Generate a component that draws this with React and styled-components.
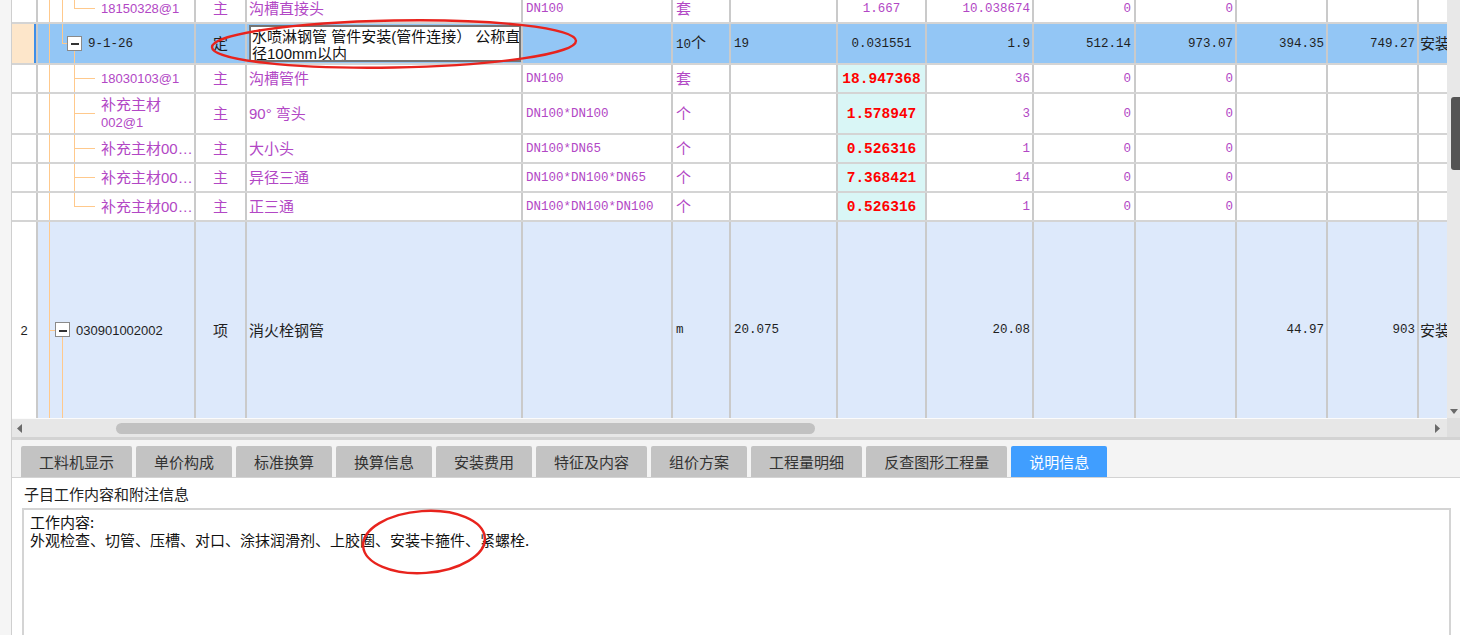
import React from "react";
import styled, { createGlobalStyle } from "styled-components";

const GlobalStyle = createGlobalStyle`
  * { box-sizing: border-box; }
  html, body { margin: 0; padding: 0; background: #ffffff; }
  body {
    font-family: "Liberation Sans", "Noto Sans CJK SC", sans-serif;
    font-size: 13px;
    color: #1e1e1e;
    overflow: hidden;
  }
`;

const PURPLE = "#b247c5";
const DARK = "#1f1f1f";
const TREE = "#ffc98c";

const COLS = [26, 158, 51, 276, 150, 58, 107, 89, 107, 102, 101, 91, 91, 80];

const Page = styled.div`
  position: relative;
  width: 1460px;
  height: 635px;
  overflow: hidden;
  display: flex;
  background: #ffffff;
`;

const Gutter = styled.div`
  flex: none;
  width: 12px;
  background: #f5f5f5;
  border-right: 1px solid #cfcfcf;
`;

const Main = styled.div`
  flex: 1;
  min-width: 0;
  display: flex;
  flex-direction: column;
`;

const GridArea = styled.div`
  flex: none;
  height: 418px;
  display: flex;
`;

const Viewport = styled.div`
  flex: 1;
  min-width: 0;
  overflow: hidden;
  background: #ffffff;
`;

const Body = styled.div`
  margin-top: -5px;
  width: 1487px;
`;

const Row = styled.div`
  display: flex;
  height: ${(p) => p.$h}px;
  border-bottom: 2px solid #d4d4d4;
  background: ${(p) => p.$bg};
  color: ${(p) => p.$color};
`;

const Cell = styled.div`
  flex: none;
  width: ${(p) => p.$w}px;
  border-right: 2px solid #cacaca;
  display: flex;
  align-items: center;
  justify-content: ${(p) =>
    p.$align === "center" ? "center" : p.$align === "right" ? "flex-end" : "flex-start"};
  padding: ${(p) => p.$pad || "0 3px"};
  background: ${(p) => p.$bg || "transparent"};
  box-shadow: ${(p) => (p.$mark ? "inset -2px 0 0 #3d8ee8" : "none")};
  overflow: hidden;
  white-space: nowrap;
`;

const Cjk = styled.span`
  font-family: "Liberation Sans", "Noto Sans CJK SC", sans-serif;
  font-size: 15px;
  line-height: 17px;
`;

const CodeText = styled.span`
  font-family: "Liberation Sans", "Noto Sans CJK SC", sans-serif;
  font-size: 13px;
  line-height: 17px;
  white-space: normal;
`;

const Num = styled.span`
  font-family: "Liberation Mono", "Noto Sans CJK SC", monospace;
  font-size: 12.5px;
  line-height: 16px;
`;

const RedNum = styled.span`
  font-family: "Liberation Mono", monospace;
  font-size: 14.5px;
  font-weight: bold;
  color: #ff0000;
`;

const Editor = styled.div`
  flex: 1;
  align-self: stretch;
  margin: 1px 0 1px 0;
  background: #ffffff;
  border: 2px solid #747474;
  padding: 1px 0 0 1px;
  color: #111111;
  font-family: "Liberation Sans", "Noto Sans CJK SC", sans-serif;
  font-size: 15px;
  line-height: 17px;
  white-space: nowrap;
  overflow: hidden;
`;

const TreeSvg = styled.svg`
  flex: none;
  align-self: stretch;
  height: 100%;
  display: block;
`;

function Tree({ width, full = [], top = [], hz = [], box }) {
  return (
    <TreeSvg width={width} shapeRendering="crispEdges">
      <g stroke={TREE} strokeWidth="1">
        {full.map((x) => (
          <line key={"f" + x} x1={x + 0.5} y1="0" x2={x + 0.5} y2="100%" />
        ))}
        {top.map((x) => (
          <line key={"t" + x} x1={x + 0.5} y1="0" x2={x + 0.5} y2="50%" />
        ))}
        {hz.map(([a, b]) => (
          <line key={"h" + a} x1={a} y1="50%" x2={b} y2="50%" />
        ))}
        {box !== undefined && <line x1={box + 0.5} y1="50%" x2={box + 0.5} y2="100%" />}
      </g>
      {box !== undefined && (
        <svg x="0" y="50%" overflow="visible">
          <rect x={box - 6.5} y={-7.5} width="14" height="14" fill="#ffffff" stroke="#8a8a8a" strokeWidth="1" />
          <rect x={box - 3.5} y={-0.5} width="8" height="2" fill="#333333" />
        </svg>
      )}
    </TreeSvg>
  );
}

const TREES = {
  A: { width: 63, full: [11, 24], top: [36], hz: [[36, 57]] },
  B: { width: 50, full: [11], top: [24], hz: [[24, 29]], box: 36 },
  C: { width: 63, full: [11, 36], hz: [[36, 57]] },
  D: { width: 63, full: [11], top: [36], hz: [[36, 57]] },
  E: { width: 38, full: [11], hz: [[11, 17]], box: 24 },
};

const ROWS = [
  { h: 29, kind: "child", tree: "A", code: "18150328@1", type: "主", name: "沟槽直接头", spec: "DN100", unit: "套", qty: "1.667", amount: "10.038674", c10: "0", c11: "0" },
  { h: 41, kind: "sel", tree: "B", code: "9-1-26", type: "定", editor: ["水喷淋钢管 管件安装(管件连接） 公称直", "径100mm以内"], unit: "10个", c7: "19", qty: "0.031551", amount: "1.9", c10: "512.14", c11: "973.07", c12: "394.35", c13: "749.27", c14: "安装" },
  { h: 29, kind: "child", tree: "C", code: "18030103@1", type: "主", name: "沟槽管件", spec: "DN100", unit: "套", red: "18.947368", amount: "36", c10: "0", c11: "0" },
  { h: 41, kind: "child", tree: "C", code: ["补充主材", "002@1"], type: "主", name: "90° 弯头", spec: "DN100*DN100", unit: "个", red: "1.578947", amount: "3", c10: "0", c11: "0" },
  { h: 29, kind: "child", tree: "C", code: "补充主材00…", type: "主", name: "大小头", spec: "DN100*DN65", unit: "个", red: "0.526316", amount: "1", c10: "0", c11: "0" },
  { h: 29, kind: "child", tree: "C", code: "补充主材00…", type: "主", name: "异径三通", spec: "DN100*DN100*DN65", unit: "个", red: "7.368421", amount: "14", c10: "0", c11: "0" },
  { h: 29, kind: "child", tree: "D", code: "补充主材00…", type: "主", name: "正三通", spec: "DN100*DN100*DN100", unit: "个", red: "0.526316", amount: "1", c10: "0", c11: "0" },
  { h: 218, kind: "item", tree: "E", num: "2", code: "030901002002", type: "项", name: "消火栓钢管", unit: "m", c7: "20.075", amount: "20.08", c12: "44.97", c13: "903", c14: "安装" },
];

const KIND = {
  child: { bg: "#ffffff", color: PURPLE },
  sel: { bg: "#93c6f5", color: DARK },
  item: { bg: "#dde9fb", color: DARK },
};

function GridRow({ r }) {
  const k = KIND[r.kind];
  const sel = r.kind === "sel";
  return (
    <Row $h={r.h} $bg={k.bg} $color={k.color}>
      <Cell $w={COLS[0]} $align="center" $bg={sel ? "#fde6ca" : "#ffffff"} $mark={sel}>
        <CodeText>{r.num}</CodeText>
      </Cell>
      <Cell $w={COLS[1]} $pad="0">
        <Tree {...TREES[r.tree]} />
        {sel ? (
          <Num>{r.code}</Num>
        ) : Array.isArray(r.code) ? (
          <CodeText>
            <Cjk>{r.code[0]}</Cjk>
            <br />
            {r.code[1]}
          </CodeText>
        ) : (
          <CodeText>{r.code.startsWith("补") ? <Cjk>{r.code}</Cjk> : r.code}</CodeText>
        )}
      </Cell>
      <Cell $w={COLS[2]} $align="center">
        <Cjk>{r.type}</Cjk>
      </Cell>
      <Cell $w={COLS[3]} $pad="0 0 0 2px">
        {r.editor ? (
          <Editor>
            {r.editor[0]}
            <br />
            {r.editor[1]}
          </Editor>
        ) : (
          <Cjk>{r.name}</Cjk>
        )}
      </Cell>
      <Cell $w={COLS[4]}>
        <Num>{r.spec}</Num>
      </Cell>
      <Cell $w={COLS[5]}>
        {r.unit === "10个" ? (
          <Cjk>
            <Num>10</Num>个
          </Cjk>
        ) : r.unit === "m" ? (
          <Num>m</Num>
        ) : (
          <Cjk>{r.unit}</Cjk>
        )}
      </Cell>
      <Cell $w={COLS[6]}>
        <Num>{r.c7}</Num>
      </Cell>
      <Cell $w={COLS[7]} $align="center" $bg={r.red ? "#d9f6f6" : undefined}>
        {r.red ? <RedNum>{r.red}</RedNum> : <Num>{r.qty}</Num>}
      </Cell>
      <Cell $w={COLS[8]} $align="right" $pad="0 2px 0 0">
        <Num>{r.amount}</Num>
      </Cell>
      <Cell $w={COLS[9]} $align="right" $pad="0 3px 0 0">
        <Num>{r.c10}</Num>
      </Cell>
      <Cell $w={COLS[10]} $align="right" $pad="0 2px 0 0">
        <Num>{r.c11}</Num>
      </Cell>
      <Cell $w={COLS[11]} $align="right" $pad="0 2px 0 0">
        <Num>{r.c12}</Num>
      </Cell>
      <Cell $w={COLS[12]} $align="right" $pad="0 2px 0 0">
        <Num>{r.c13}</Num>
      </Cell>
      <Cell $w={COLS[13]} $pad="0 0 0 1px">
        <Cjk>{r.c14}</Cjk>
      </Cell>
    </Row>
  );
}

const VScroll = styled.div`
  flex: none;
  width: 13px;
  background: #e8e8e8;
  display: flex;
  flex-direction: column;
  align-items: flex-end;
  padding: 97px 0 4px 0;
`;

const VThumb = styled.div`
  width: 9px;
  height: 73px;
  background: #545454;
  border-radius: 3px 0 0 3px;
`;

const VArrow = styled.svg`
  margin-top: auto;
  align-self: center;
  display: block;
`;

const HScrollRow = styled.div`
  flex: none;
  height: 19px;
  display: flex;
`;

const HTrack = styled.div`
  flex: 1;
  min-width: 0;
  background: #e7e7e7;
  border-top: 1px solid #fbfbfb;
  display: flex;
  align-items: center;
  padding: 0 7px 0 5px;
`;

const HThumb = styled.div`
  width: 699px;
  height: 11px;
  border-radius: 6px;
  background: #c1c1c1;
  margin-left: 94px;
`;

const LeftArrow = styled.svg`
  display: block;
`;

const RightArrow = styled.svg`
  margin-left: auto;
  display: block;
`;

const Corner = styled.div`
  flex: none;
  width: 13px;
  background: #dedede;
`;

const Divider = styled.div`
  flex: none;
  height: 3px;
  background: #d3d3d3;
`;

const TabBar = styled.div`
  flex: none;
  height: 38px;
  background: #f4f4f4;
  border-bottom: 1px solid #d3d3d3;
  display: flex;
  align-items: flex-end;
  gap: 4px;
  padding-left: 9px;
`;

const Tab = styled.div`
  height: 31px;
  padding: 0 18px;
  display: flex;
  align-items: center;
  border-radius: 2px 2px 0 0;
  background: ${(p) => (p.$active ? "#409eff" : "#c3c3c3")};
  color: ${(p) => (p.$active ? "#ffffff" : "#333333")};
  font-family: "Noto Sans CJK SC", sans-serif;
  font-size: 15px;
  white-space: nowrap;
`;

const InfoPanel = styled.div`
  flex: 1;
  min-height: 0;
  background: #ffffff;
  display: flex;
  flex-direction: column;
  padding: 7px 9px 0 12px;
`;

const Label = styled.div`
  font-family: "Noto Sans CJK SC", sans-serif;
  font-size: 15px;
  line-height: 18px;
  color: #222222;
`;

const TextBox = styled.div`
  flex: 1;
  margin: 5px 0 0 -2px;
  border: 2px solid #d4d4d4;
  border-bottom: none;
  padding: 3px 6px;
  color: #111111;
`;

const TextLine = styled.div`
  font-family: "Noto Sans CJK SC", sans-serif;
  font-size: 15px;
  line-height: 18px;
  height: 18px;
  white-space: nowrap;
`;

const Overlay = styled.svg`
  position: absolute;
  left: 0;
  top: 0;
  pointer-events: none;
`;

const TABS = ["工料机显示", "单价构成", "标准换算", "换算信息", "安装费用", "特征及内容", "组价方案", "工程量明细", "反查图形工程量", "说明信息"];

export default function App() {
  return (
    <>
      <GlobalStyle />
      <Page>
        <Gutter />
        <Main>
          <GridArea>
            <Viewport>
              <Body>
                {ROWS.map((r, i) => (
                  <GridRow key={i} r={r} />
                ))}
              </Body>
            </Viewport>
            <VScroll>
              <VThumb />
              <VArrow width="8" height="5" viewBox="0 0 8 5">
                <path d="M0 0 L8 0 L4 5 Z" fill="#6a6a6a" />
              </VArrow>
            </VScroll>
          </GridArea>
          <HScrollRow>
            <HTrack>
              <LeftArrow width="5" height="9" viewBox="0 0 5 9">
                <path d="M5 0 L5 9 L0 4.5 Z" fill="#6a6a6a" />
              </LeftArrow>
              <HThumb />
              <RightArrow width="5" height="9" viewBox="0 0 5 9">
                <path d="M0 0 L0 9 L5 4.5 Z" fill="#6a6a6a" />
              </RightArrow>
            </HTrack>
            <Corner />
          </HScrollRow>
          <Divider />
          <TabBar>
            {TABS.map((t) => (
              <Tab key={t} $active={t === "说明信息"}>
                {t}
              </Tab>
            ))}
          </TabBar>
          <InfoPanel>
            <Label>子目工作内容和附注信息</Label>
            <TextBox>
              <TextLine>工作内容:</TextLine>
              <TextLine>外观检查、切管、压槽、对口、涂抹润滑剂、上胶圈、安装卡箍件、紧螺栓.</TextLine>
            </TextBox>
          </InfoPanel>
        </Main>
        <Overlay width="1460" height="635" viewBox="0 0 1460 635">
          <ellipse cx="394" cy="44" rx="182" ry="23.5" transform="rotate(-1 394 44)" fill="none" stroke="#e8231d" strokeWidth="2.4" />
          <ellipse cx="424" cy="542" rx="61" ry="31" transform="rotate(-4 424 542)" fill="none" stroke="#e8231d" strokeWidth="2.4" />
        </Overlay>
      </Page>
    </>
  );
}
